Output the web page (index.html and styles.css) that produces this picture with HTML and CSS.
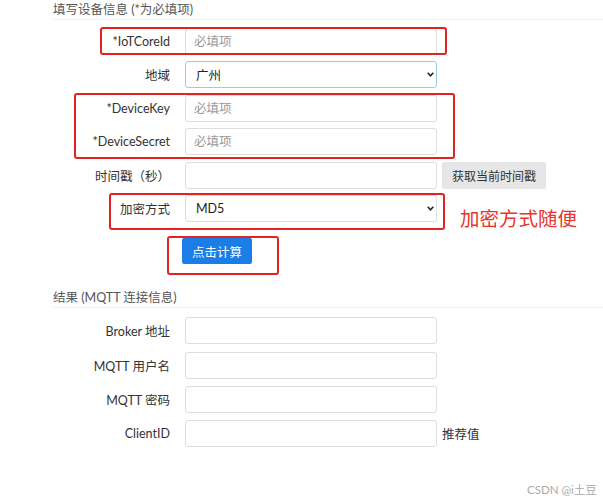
FILE: index.html
```html
<!DOCTYPE html>
<html lang="zh-CN">
<head>
<meta charset="utf-8">
<title>MQTT</title>
<link rel="stylesheet" href="styles.css">
</head>
<body>
<div class="page">
  <div class="section-title">填写设备信息 (*为必填项)</div>
  <div class="form">
    <div class="row">
      <label class="label">*IoTCoreId</label>
      <input class="field" type="text" placeholder="必填项">
    </div>
    <div class="row">
      <label class="label">地域</label>
      <div class="select focus">
        <span class="select-text">广州</span>
        <svg class="chev" width="7" height="5" viewBox="0 0 7 5"><path d="M0.7 0.8 L3.5 3.8 L6.3 0.8" fill="none" stroke="#222" stroke-width="1.5"/></svg>
      </div>
    </div>
    <div class="row">
      <label class="label">*DeviceKey</label>
      <input class="field" type="text" placeholder="必填项">
    </div>
    <div class="row">
      <label class="label">*DeviceSecret</label>
      <input class="field" type="text" placeholder="必填项">
    </div>
    <div class="row">
      <label class="label">时间戳（秒）</label>
      <input class="field" type="text">
      <button class="btn-gray">获取当前时间戳</button>
    </div>
    <div class="row">
      <label class="label">加密方式</label>
      <div class="select">
        <span class="select-text">MD5</span>
        <svg class="chev" width="7" height="5" viewBox="0 0 7 5"><path d="M0.7 0.8 L3.5 3.8 L6.3 0.8" fill="none" stroke="#222" stroke-width="1.5"/></svg>
      </div>
    </div>
    <div class="row btn-row">
      <button class="btn-primary">点击计算</button>
    </div>
  </div>

  <div class="section-title second">结果 (MQTT 连接信息)</div>
  <div class="form result">
    <div class="row">
      <label class="label">Broker 地址</label>
      <input class="field" type="text">
    </div>
    <div class="row">
      <label class="label">MQTT 用户名</label>
      <input class="field" type="text">
    </div>
    <div class="row">
      <label class="label">MQTT 密码</label>
      <input class="field" type="text">
    </div>
    <div class="row">
      <label class="label">ClientID</label>
      <input class="field" type="text">
      <span class="hint">推荐值</span>
    </div>
  </div>

  <div class="mark mark-1"></div>
  <div class="mark mark-2"></div>
  <div class="mark mark-3"></div>
  <div class="mark mark-4"></div>
  <div class="note">加密方式随便</div>
  <div class="watermark">CSDN @i土豆</div>
</div>
</body>
</html>
```

FILE: styles.css
```css
* { box-sizing: border-box; }
html, body {
  margin: 0;
  padding: 0;
  background: #fff;
}
body {
  font-family: Lato, "Noto Sans CJK SC", sans-serif;
  font-size: 12.5px;
  color: #333;
}
.page {
  position: relative;
  width: 603px;
  height: 500px;
  overflow: hidden;
  padding-left: 53px;
}
.section-title {
  height: 20px;
  line-height: 19px;
  color: #555;
  border-bottom: 1px solid #eee;
  font-size: 12.5px;
}
.section-title.second {
  margin-top: 24px;
}
.form {
  display: flex;
  flex-direction: column;
  gap: 6.4px;
  padding-top: 8px;
}
.form.result {
  gap: 7.3px;
  padding-top: 9px;
}
.row {
  display: flex;
  align-items: center;
  height: 27px;
}
.label {
  width: 117px;
  text-align: right;
  margin-right: 15px;
  color: #333;
  white-space: nowrap;
}
.field {
  width: 252px;
  height: 27px;
  border: 1px solid #ddd;
  border-radius: 3px;
  padding: 0 8px;
  font: inherit;
  color: #333;
  outline: none;
}
.field::placeholder {
  color: #999;
}
.select {
  position: relative;
  width: 252px;
  height: 27px;
  border: 1px solid #ddd;
  border-radius: 3px;
  display: flex;
  align-items: center;
  padding-left: 10px;
  color: #222;
}
.select.focus {
  border-color: #9ccbea;
}
.chev {
  position: absolute;
  right: 2px;
  top: 10px;
}
.btn-gray {
  margin-left: 5px;
  width: 104px;
  height: 27px;
  border: none;
  border-radius: 2px;
  background: #e6e6e6;
  color: #333;
  font: inherit;
  font-size: 12px;
  padding: 0;
}
.btn-row {
  margin-top: 10px;
  padding-left: 129px;
  height: 26px;
}
.btn-primary {
  width: 70px;
  height: 26px;
  border: none;
  border-radius: 2px;
  background: #1a7ee6;
  color: #fff;
  font: inherit;
  padding: 0;
}
.hint {
  margin-left: 5px;
  color: #333;
}
.mark {
  position: absolute;
  border: 2px solid #e42222;
  border-radius: 3px;
}
.mark-1 { left: 100px; top: 27px; width: 347px; height: 28px; }
.mark-2 { left: 74px; top: 93px; width: 381px; height: 66px; }
.mark-3 { left: 109px; top: 193px; width: 336px; height: 37px; }
.mark-4 { left: 167px; top: 236px; width: 112px; height: 39px; }
.note {
  position: absolute;
  left: 460px;
  top: 206px;
  font-size: 19.5px;
  line-height: 26px;
  color: #e8352e;
}
.watermark {
  position: absolute;
  left: 527px;
  top: 481px;
  font-size: 11.5px;
  color: #aaa;
}
```
